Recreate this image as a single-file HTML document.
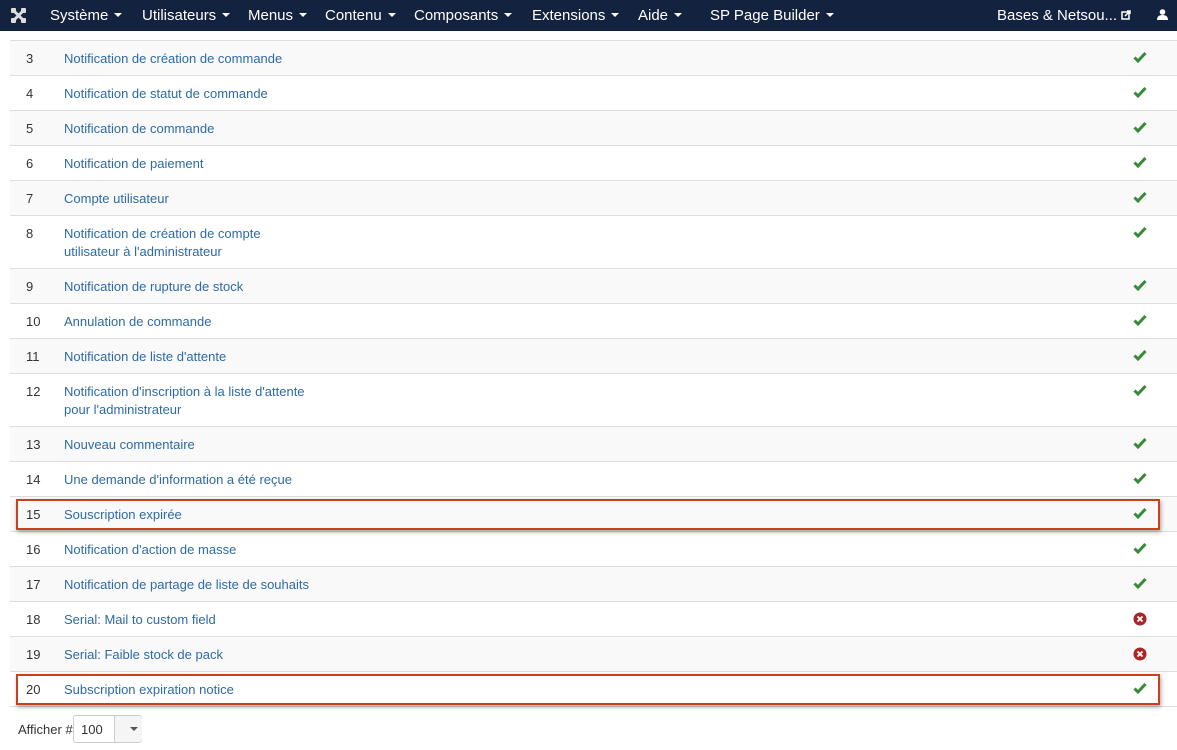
<!DOCTYPE html>
<html><head><meta charset="utf-8"><style>
*{margin:0;padding:0;box-sizing:border-box}
body{width:1177px;height:750px;overflow:hidden;background:#fff;font-family:"Liberation Sans",sans-serif;font-size:13px;color:#333;position:relative}
.nav{position:absolute;left:0;top:0;width:1177px;height:31px;background:#13223f;color:#fff;font-size:15px}
.nav span{position:absolute;top:7px;white-space:nowrap}
.car{display:inline-block;width:0;height:0;border-left:4px solid transparent;border-right:4px solid transparent;border-top:4px solid #fff;vertical-align:middle;margin-left:6px;margin-top:-2px}
.row{position:absolute;left:10px;width:1167px;border-top:1px solid #ddd}
.row.g{background:#f9f9f9}
.num{position:absolute;left:16px;top:9px;line-height:18px}
.lnk{position:absolute;left:54px;top:9px;line-height:18px;color:#2d6aa6}
.ic{position:absolute;left:1123px;top:10px}
.box{position:absolute;left:16px;width:1144px;height:31px;border:2px solid #c9411c;box-shadow:1px 2px 4px rgba(0,0,0,.35)}
</style></head><body>
<div class="nav">
<svg style="position:absolute;left:10px;top:7px" width="17" height="17" viewBox="0 0 17 17"><g fill="#ddd"><rect x="1" y="1" width="5" height="5" rx="1"/><rect x="11" y="1" width="5" height="5" rx="1"/><rect x="1" y="11" width="5" height="5" rx="1"/><rect x="11" y="11" width="5" height="5" rx="1"/><path d="M4 4L13 13M13 4L4 13" stroke="#ddd" stroke-width="3"/></g></svg>
<span style="left:50px">Système<i class="car"></i></span>
<span style="left:142px">Utilisateurs<i class="car"></i></span>
<span style="left:248px">Menus<i class="car"></i></span>
<span style="left:325px">Contenu<i class="car"></i></span>
<span style="left:414px">Composants<i class="car"></i></span>
<span style="left:532px">Extensions<i class="car"></i></span>
<span style="left:638px">Aide<i class="car"></i></span>
<span style="left:710px">SP Page Builder<i class="car"></i></span>
<span style="left:997px">Bases &amp; Netsou... <svg width="10" height="10" viewBox="0 0 10 10"><rect x="1" y="2" width="7" height="7" fill="none" stroke="#fff" stroke-width="1.5"/><path d="M4 6L9 1M6 1H9V4" stroke="#fff" stroke-width="1.5" fill="none"/></svg></span>
<svg style="position:absolute;left:1157px;top:9px" width="11" height="11" viewBox="0 0 11 11"><circle cx="5.5" cy="3" r="2.8" fill="#fff"/><path d="M0 11Q0 6 5.5 6Q11 6 11 11Z" fill="#fff"/></svg>
</div>
<div id="t"></div>
<div class="box" style="top:499px"></div>
<div class="box" style="top:674px"></div>
<div style="position:absolute;left:18px;top:722px;font-size:13px">Afficher #</div>
<div style="position:absolute;left:73px;top:715px;width:69px;height:28px;border:1px solid #ccc;border-radius:3px;background:#fff">
<span style="position:absolute;left:7px;top:6px">100</span>
<div style="position:absolute;left:40px;top:0;width:28px;height:26px;border-left:1px solid #ccc;background:#f5f5f5;border-radius:0 3px 3px 0"></div>
<i class="car" style="position:absolute;left:50px;top:13px;border-top-color:#555"></i>
</div>
<script>
var rows=[[3,"Notification de création de commande",1],[4,"Notification de statut de commande",1],[5,"Notification de commande",1],[6,"Notification de paiement",1],[7,"Compte utilisateur",1],[8,"Notification de création de compte<br>utilisateur à l'administrateur",1,2],[9,"Notification de rupture de stock",1],[10,"Annulation de commande",1],[11,"Notification de liste d'attente",1],[12,"Notification d'inscription à la liste d'attente<br>pour l'administrateur",1,2],[13,"Nouveau commentaire",1],[14,"Une demande d'information a été reçue",1],[15,"Souscription expirée",1],[16,"Notification d'action de masse",1],[17,"Notification de partage de liste de souhaits",1],[18,"Serial: Mail to custom field",0],[19,"Serial: Faible stock de pack",0],[20,"Subscription expiration notice",1]];
var y=40,h="";
var ok='<svg width="14" height="12" viewBox="0 0 14 12"><path d="M1.5 6.5L5 10L12.5 2" stroke="#378a38" stroke-width="3" fill="none"/></svg>';
var no='<svg width="14" height="14" viewBox="0 0 14 14"><circle cx="7" cy="7" r="6.5" fill="#a82626"/><path d="M4.5 4.5L9.5 9.5M9.5 4.5L4.5 9.5" stroke="#fff" stroke-width="1.8"/></svg>';
rows.forEach(function(r,i){var hh=r[3]?53:35;h+='<div class="row'+(i%2==0?' g':'')+'" style="top:'+y+'px;height:'+(hh+1)+'px"><span class="num">'+r[0]+'</span><span class="lnk">'+r[1]+'</span><span class="ic">'+(r[2]?ok:no)+'</span></div>';y+=hh;});
h+='<div class="row" style="top:'+y+'px;height:1px"></div>';
document.getElementById('t').innerHTML=h;
</script>
</body></html>
